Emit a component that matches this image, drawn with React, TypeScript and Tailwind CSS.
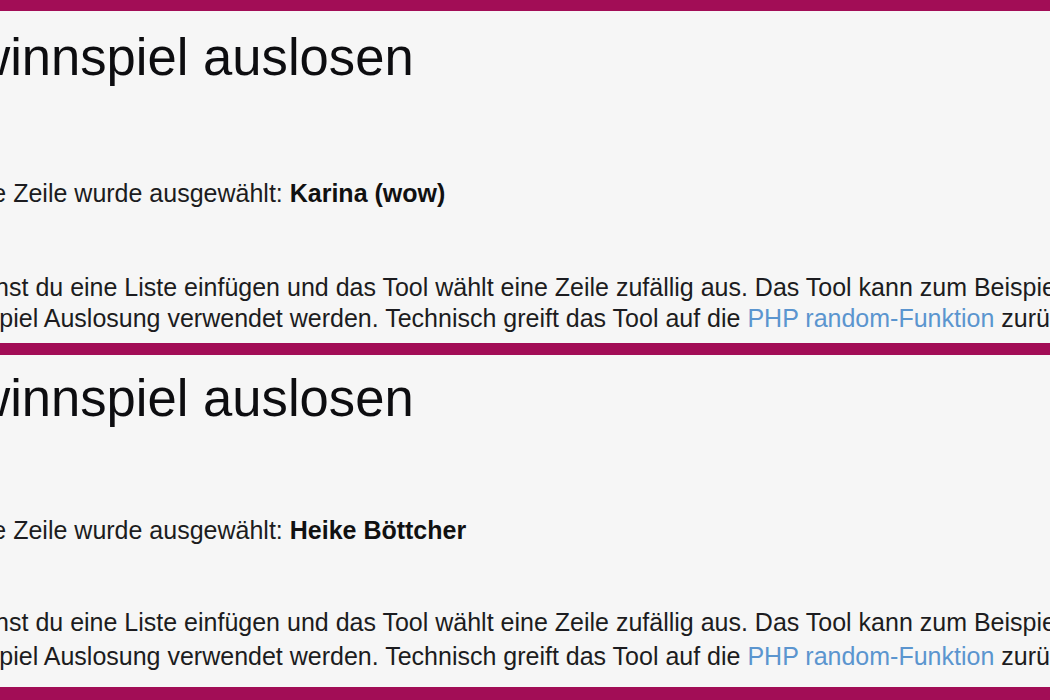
import React from 'react';

interface DrawResult {
    winner: string;
    heading: string;
    line: string;
    para: string;
}

const Bar: React.FC = () => <div className="h-[12px] bg-[#a20d56]" />;

const Panel: React.FC<DrawResult> = ({ winner, heading, line, para }) => {
    return (
        <div className="overflow-hidden bg-[#f6f6f6] h-[332px] whitespace-nowrap" style={{ fontFamily: '"Liberation Sans", Arial, sans-serif' }}>
            <div className="ml-[-98px]">
                <h1 className={`text-[52.6px] leading-[53px] text-[#0d0d10] font-normal ${heading}`}>Gewinnspiel auslosen</h1>
                <p className={`text-[25px] leading-[25px] text-[#1c1c20] ${line}`}>
                    Folgende Zeile wurde ausgewählt: <b className="font-bold text-[#111]">{winner}</b>
                </p>
                <p className={`text-[25px] text-[#1c1c20] ${para}`}>
                    Hier kannst du eine Liste einfügen und das Tool wählt eine Zeile zufällig aus. Das Tool kann zum Beispiel für ein
                    <br />
                    Gewinnspiel Auslosung verwendet werden. Technisch greift das Tool auf die{' '}
                    <a className="text-[#5b95cf]">PHP random-Funktion</a> zurück.
                </p>
            </div>
        </div>
    );
};

export default function App() {
    return (
        <div className="w-[1050px] h-[700px] bg-[#a20d56] flex flex-col">
            <div className="h-[11px]" />
            <Panel winner="Karina (wow)" heading="mt-[19px]" line="mt-[98px]" para="mt-[66px] leading-[31px]" />
            <Bar />
            <Panel winner="Heike Böttcher" heading="mt-[16px]" line="mt-[94px]" para="mt-[62px] leading-[34px]" />
        </div>
    );
}
